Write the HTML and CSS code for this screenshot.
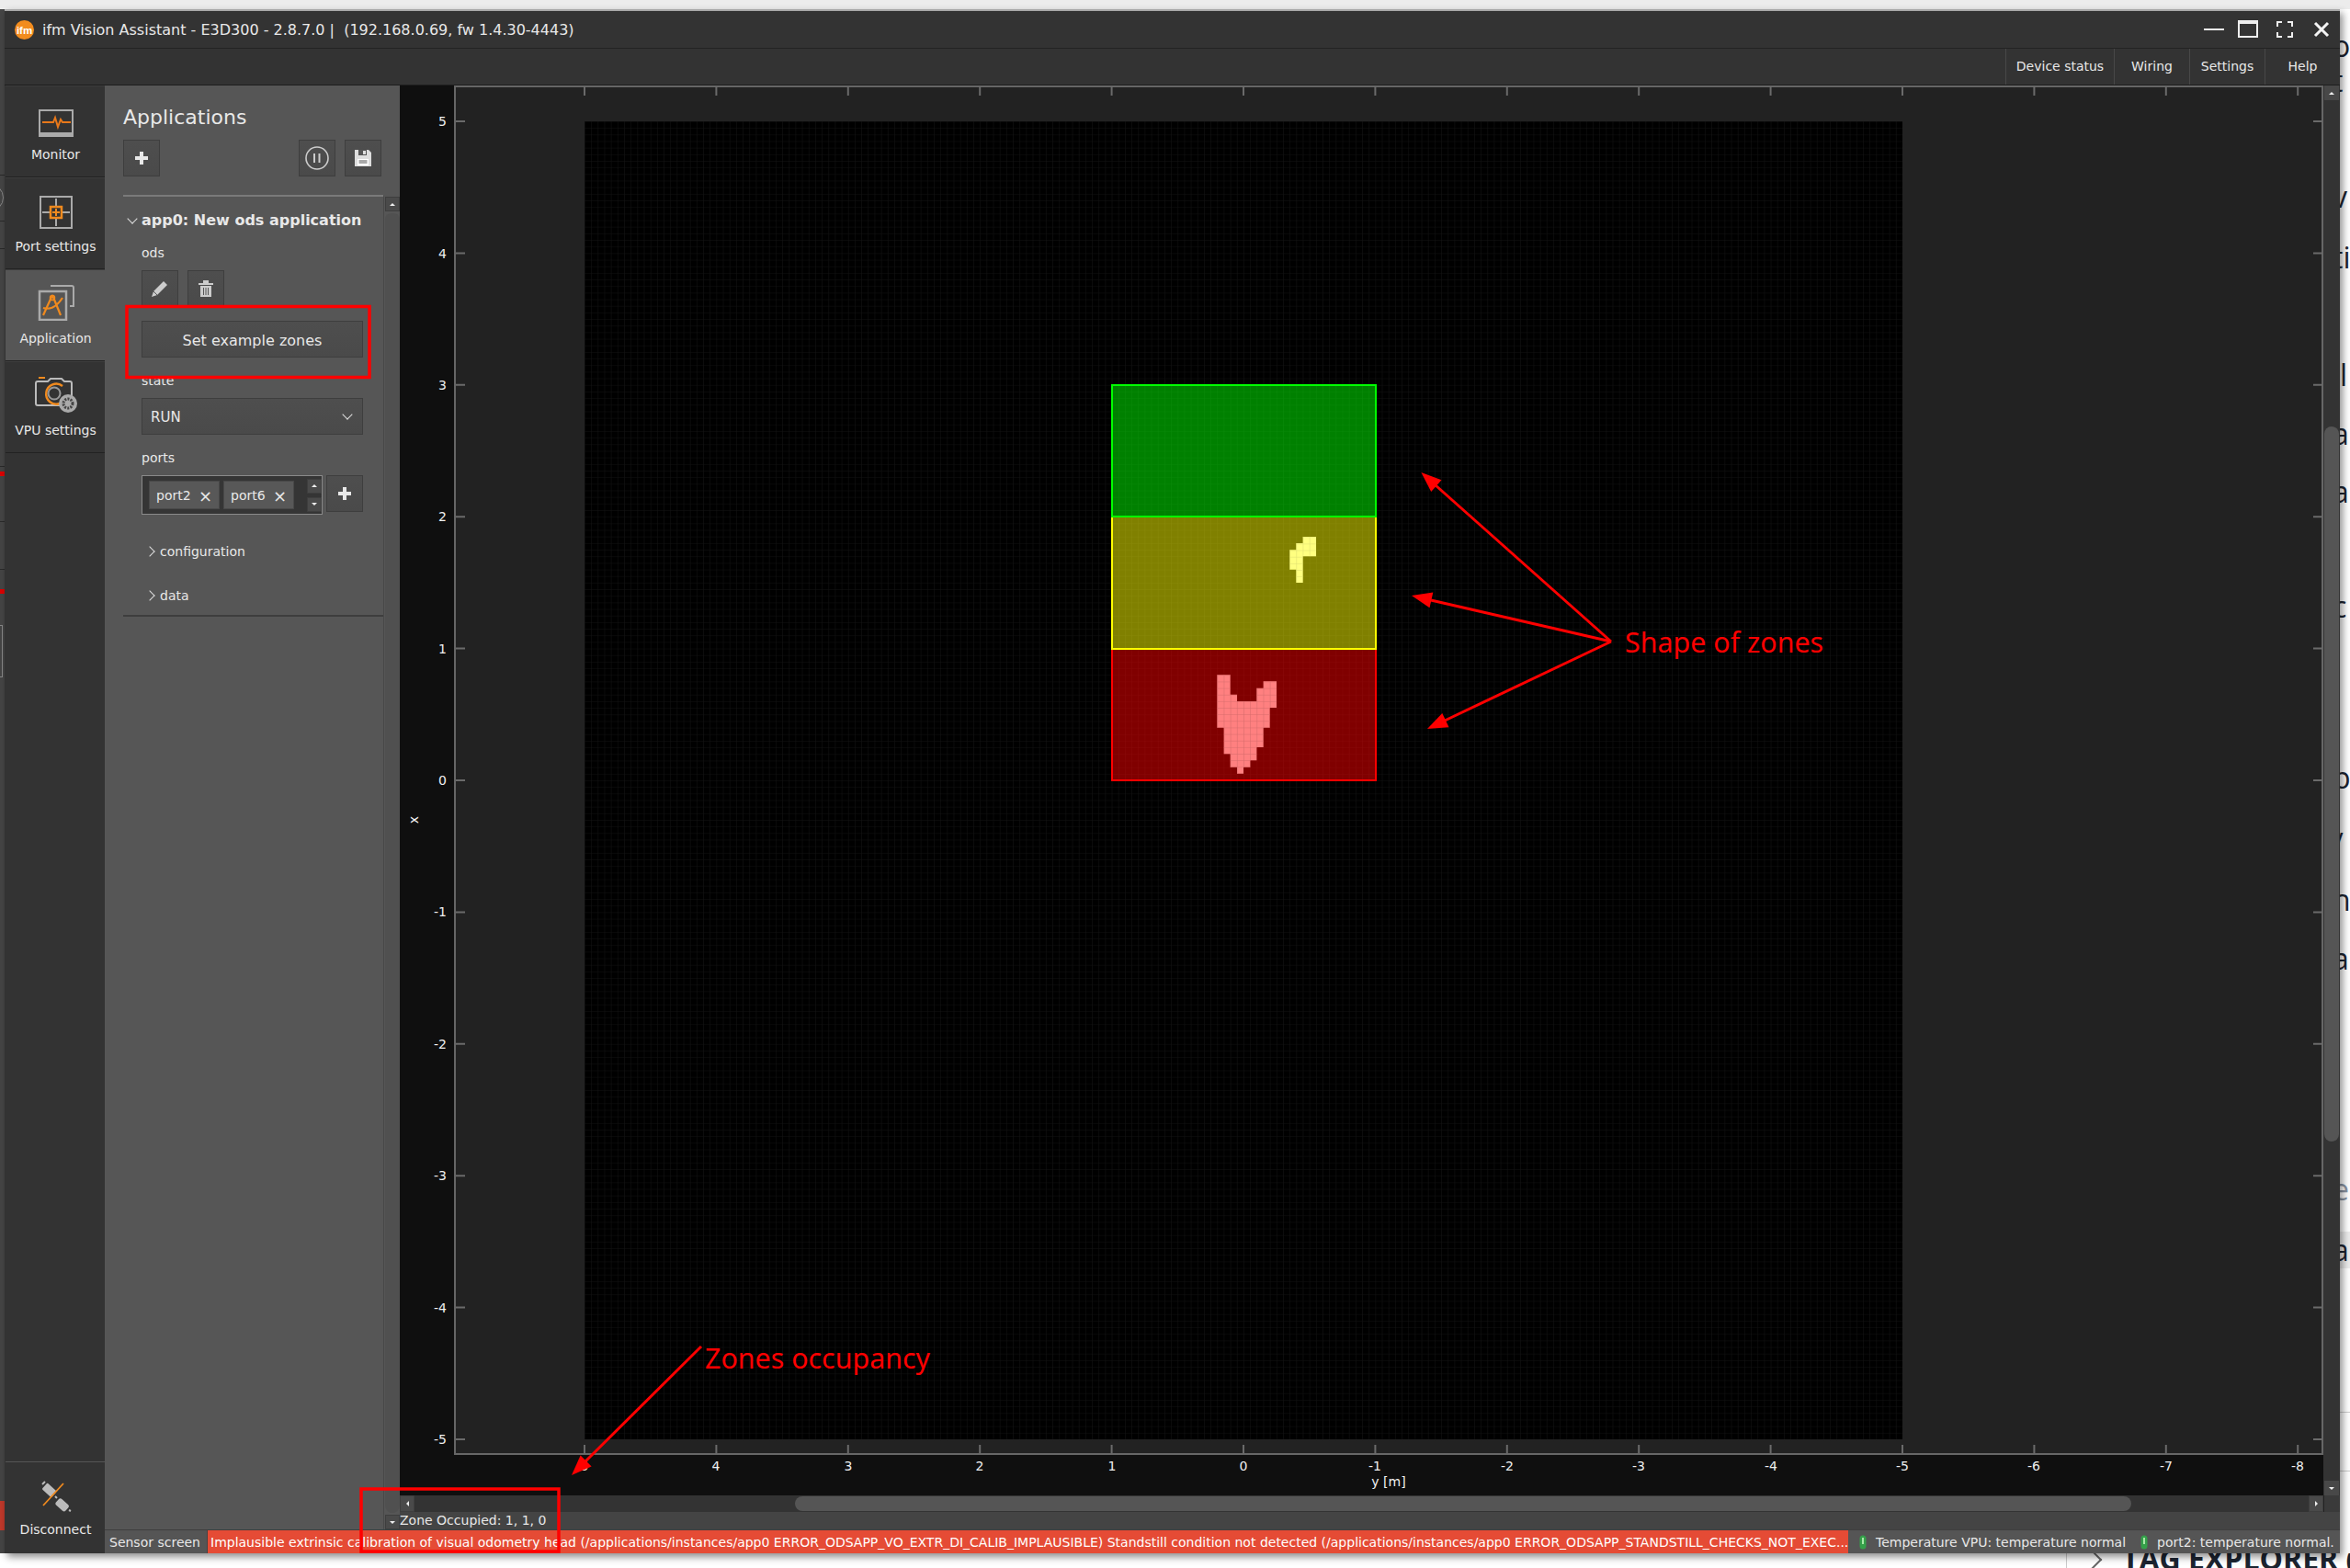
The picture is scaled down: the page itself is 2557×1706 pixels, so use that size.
FILE: index.html
```html
<!DOCTYPE html>
<html lang="en">
<head>
  <meta charset="UTF-8" />
  <title>ifm Vision Assistant</title>
  <link rel="stylesheet" href="styles.css">
</head>
<body>
  <!-- what is visible of the desktop behind the window -->
  <div class="behind">
    <div class="behind-top"></div>
    <div class="behind-left">
      <i class="hl" style="top:180px"></i>
      <i class="hl" style="top:230px"></i>
      <i class="hl" style="top:260px"></i>
      <i class="hl" style="top:497px"></i>
      <i class="hl" style="top:557px"></i>
      <i class="hl" style="top:609px"></i>
      <i class="arc"></i>
      <i class="mark" style="top:503px"></i>
      <i class="mark" style="top:631px"></i>
      <i class="box"></i>
      <i class="mark mark-big" style="top:1623px"></i>
    </div>
    <span class="ch" style="top:30px">o</span>
    <span class="ch" style="top:68px">t</span>
    <span class="ch" style="top:194px">v</span>
    <span class="ch" style="top:260px">ti</span>
    <span class="ch" style="top:388px">il</span>
    <span class="ch" style="top:452px">a</span>
    <span class="ch" style="top:515px">a</span>
    <span class="ch" style="top:640px">c</span>
    <span class="ch" style="top:826px">p</span>
    <span class="ch" style="top:898px">/</span>
    <span class="ch" style="top:959px">n</span>
    <span class="ch" style="top:1023px">a</span>
    <span class="ch ch-dim" style="top:1274px">el</span>
    <span class="ch ch-band" style="top:1340px">a</span>
    <span class="ch" style="top:1400px">.</span>
    <div class="rule" style="top:1536px"></div>
    <div class="rule" style="top:1600px"></div>
    <div class="tag-line"></div>
    <div class="tag-chev"></div>
    <div class="tag-title">TAG EXPLORER (</div>
  </div>

  <div class="window">
    <header class="titlebar">
      <svg class="logo" viewBox="0 0 24 24"><circle cx="12" cy="12" r="11" fill="#f28c1e"/><text x="12" y="17" text-anchor="middle" font-family="Liberation Sans" font-size="12" font-weight="700" fill="#fff">ifm</text></svg>
      <div class="title">ifm Vision Assistant - E3D300 - 2.8.7.0 |&nbsp; (192.168.0.69, fw 1.4.30-4443)</div>
      <div class="win-btns">
        <svg width="24" height="20" viewBox="0 0 24 20"><path d="M1 10h22" stroke="#eee" stroke-width="2"/></svg>
        <svg class="w-max" width="24" height="20" viewBox="0 0 24 20"><path d="M2 2h20v16H2z" fill="none" stroke="#eee" stroke-width="2"/><path d="M1 2h22" stroke="#eee" stroke-width="4"/></svg>
        <svg class="w-full" width="20" height="20" viewBox="0 0 20 20"><path d="M7 2H2v5M13 2h5v5M7 18H2v-5M13 18h5v-5" fill="none" stroke="#eee" stroke-width="2"/></svg>
        <svg class="w-close" width="18" height="18" viewBox="0 0 18 18"><path d="M2 2l14 14M16 2L2 16" stroke="#f4f4f4" stroke-width="3"/></svg>
      </div>
    </header>

    <nav class="menubar">
      <a class="menu-item m-wide">Device status</a>
      <a class="menu-item">Wiring</a>
      <a class="menu-item">Settings</a>
      <a class="menu-item">Help</a>
    </nav>

    <div class="main">
      <aside class="sidebar">
        <div class="side-item">
          <svg class="side-icon" width="40" height="30" viewBox="0 0 40 30">
            <path d="M2 1h36v28H2z" fill="#333" stroke="#aaa" stroke-width="2"/><path d="M1 25h38v5H1z" fill="#aaa"/>
            <path d="M5 14h12l2-5 3 10 3-8 2 3h9" fill="none" stroke="#e8781a" stroke-width="2"/>
          </svg>
          <span>Monitor</span>
        </div>
        <div class="side-item">
          <svg class="side-icon" width="36" height="36" viewBox="0 0 36 36">
            <path d="M1 1h34v34H1z" fill="none" stroke="#aaa" stroke-width="2"/>
            <path d="M18 3v8M18 25v8M3 18h8M25 18h8" stroke="#aaa" stroke-width="2"/>
            <path d="M12 12h12v12H12z" fill="none" stroke="#f08a1e" stroke-width="2.5"/><path d="M18 14v8M14 18h8" stroke="#f08a1e" stroke-width="2"/>
          </svg>
          <span>Port settings</span>
        </div>
        <div class="side-item active">
          <svg class="side-icon" width="40" height="40" viewBox="0 0 40 40">
            <path d="M14 2h23a2 2 0 0 1 2 2v20h-4" fill="none" stroke="#aaa" stroke-width="2"/>
            <path d="M2 8h29v31H2z" fill="#555" stroke="#aaa" stroke-width="2.5"/>
            <path d="M16 12l-10 22M16 12l9 22M6 26c6 2 14 0 21-11" fill="none" stroke="#f08a1e" stroke-width="2.2"/><circle cx="16" cy="15" r="2.5" fill="none" stroke="#f08a1e" stroke-width="1.5"/>
          </svg>
          <span>Application</span>
        </div>
        <div class="side-item">
          <svg class="side-icon" width="46" height="40" viewBox="0 0 46 40">
            <path d="M4 2h7" stroke="#f08a1e" stroke-width="2"/>
            <path d="M3 6h11l3-3h12l3 3h6a2 2 0 0 1 2 2v24H3a2 2 0 0 1-2-2V8a2 2 0 0 1 2-2z" fill="none" stroke="#bbb" stroke-width="2"/>
            <path d="M27 30a11 11 0 1 1 3-19" fill="none" stroke="#f08a1e" stroke-width="2.5"/><circle cx="21" cy="19" r="6.5" fill="none" stroke="#999" stroke-width="2"/>
            <circle cx="36" cy="30" r="10" fill="#aaa"/><circle cx="36" cy="30" r="5" fill="none" stroke="#444" stroke-width="3" stroke-dasharray="2 1.2"/>
          </svg>
          <span>VPU settings</span>
        </div>
        <div class="side-fill"></div>
        <div class="side-item side-last">
          <svg class="side-icon" width="34" height="34" viewBox="0 0 34 34">
            <rect x="3" y="6" width="14" height="9" rx="1.500" fill="#bbb" transform="rotate(42 10 10)"/><path d="M2 4l3-3" stroke="#bbb" stroke-width="2"/>
            <rect x="17" y="22" width="14" height="9" rx="2.500" fill="#bbb" transform="rotate(42 24 26)"/><path d="M18 19l-2-2M31 32l2 1" stroke="#bbb" stroke-width="2"/>
            <path d="M25 3L3 27" stroke="#f08a1e" stroke-width="1.800"/>
          </svg>
          <span>Disconnect</span>
        </div>
      </aside>

      <div class="work">
        <div class="work-top">
          <section class="panel">
            <div class="panel-head">
              <h2>Applications</h2>
              <div class="head-btns">
                <button class="btn-sq"><svg width="18" height="18" viewBox="0 0 18 18"><path d="M9 2v14M2 9h14" stroke="#e8e8e8" stroke-width="4"/></svg></button>
                <span class="spacer"></span>
                <button class="btn-sq"><svg width="28" height="28" viewBox="0 0 28 28"><circle cx="14" cy="14" r="12" fill="none" stroke="#ccc" stroke-width="1.6"/><path d="M11 9v10M16.500 9v10" stroke="#ccc" stroke-width="2"/></svg></button>
                <button class="btn-sq"><svg width="20" height="20" viewBox="0 0 20 20"><path d="M1 1h15l3 3v15H1z" fill="#ddd"/><path d="M5 1h9v6H5z" fill="#555"/><path d="M10 2h3v4h-3z" fill="#ddd"/><path d="M4 11h12v7H4z" fill="#fff"/><path d="M5.500 13h9M5.500 15h9" stroke="#555"/></svg></button>
              </div>
            </div>
            <div class="panel-body">
              <div class="app-list">
                <div class="app">
                  <div class="app-name"><i class="chev chev-down"></i>app0: New ods application</div>
                  <div class="lbl lbl-first">ods</div>
                  <div class="row-btns">
                    <button class="btn-sq"><svg width="20" height="20" viewBox="0 0 20 20"><path d="M1 19l2-6L14 2l4 4L7 17z" fill="#ccc"/><path d="M3 13l4 4" stroke="#555"/></svg></button>
                    <button class="btn-sq"><svg width="18" height="20" viewBox="0 0 18 20"><path d="M1 4h16v2H1zM6 4V1h6v3" fill="#ccc"/><path d="M3 7h12v12H3z" fill="#ccc"/><path d="M6.500 9v8M9 9v8M11.500 9v8" stroke="#555"/></svg></button>
                  </div>
                  <button class="btn-wide">Set example zones</button>
                  <div class="lbl">state</div>
                  <div class="combo">RUN<i class="chev chev-down"></i></div>
                  <div class="lbl">ports</div>
                  <div class="ports">
                    <div class="port-box">
                      <span class="chip">port2<b>&#215;</b></span>
                      <span class="chip">port6<b>&#215;</b></span>
                      <span class="spin"><i class="sb"><i class="tri up"></i></i><i class="sb"><i class="tri dn"></i></i></span>
                    </div>
                    <button class="btn-sq"><svg width="18" height="18" viewBox="0 0 18 18"><path d="M9 2v14M2 9h14" stroke="#e8e8e8" stroke-width="4"/></svg></button>
                  </div>
                  <div class="tree tree-first"><i class="chev chev-right"></i>configuration</div>
                  <div class="tree"><i class="chev chev-right"></i>data</div>
                </div>
              </div>
              <div class="vbar">
                <div class="sb"><i class="tri up"></i></div>
                <div class="vbar-thumb"></div>
                <div class="sb"><i class="tri dn"></i></div>
              </div>
            </div>
          </section>

          <section class="center">
            <div class="plot-row">
              <svg class="plot" width="2093" height="1534" viewBox="435 93 2093 1534">
                <defs>
                  <pattern id="grid" x="636" y="132" width="7.17" height="7.17" patternUnits="userSpaceOnUse">
                    <path d="M0 0h7.17M0 0v7.17" stroke="#141414" stroke-width="1" fill="none"/>
                  </pattern>
                  <pattern id="cellRed" x="403" y="1003" width="21.5" height="21.43" patternUnits="userSpaceOnUse">
                    <path d="M0 0h21.5M0 0v21.43" stroke="#d46a6a" stroke-width="3" fill="none"/>
                  </pattern>
                  <pattern id="cellYel" x="403" y="1003" width="21.5" height="21.43" patternUnits="userSpaceOnUse">
                    <path d="M0 0h21.5M0 0v21.43" stroke="#dcdc70" stroke-width="3" fill="none"/>
                  </pattern>
                </defs>
                <rect x="435" y="93" width="2093" height="1534" fill="#0f0f0f"/>
                <rect x="495" y="94" width="2032" height="1488" fill="#222" stroke="#666" stroke-width="2"/>
                <path class="tick" d="M496 132h10M496 275.400h10M496 418.800h10M496 562.200h10M496 705.600h10M496 849h10M496 992.400h10M496 1135.800h10M496 1279.200h10M496 1422.600h10M496 1566h10"/>
                <path class="tick" d="M2517 132h10M2517 275.400h10M2517 418.800h10M2517 562.200h10M2517 705.600h10M2517 849h10M2517 992.400h10M2517 1135.800h10M2517 1279.200h10M2517 1422.600h10M2517 1566h10"/>
                <path class="tick" d="M636 94v10M779.400 94v10M922.800 94v10M1066.200 94v10M1209.600 94v10M1353 94v10M1496.400 94v10M1639.800 94v10M1783.200 94v10M1926.600 94v10M2070 94v10M2213.400 94v10M2356.800 94v10M2500.200 94v10"/>
                <path class="tick" d="M636 1572v10M779.400 1572v10M922.800 1572v10M1066.200 1572v10M1209.600 1572v10M1353 1572v10M1496.400 1572v10M1639.800 1572v10M1783.200 1572v10M1926.600 1572v10M2070 1572v10M2213.400 1572v10M2356.800 1572v10M2500.200 1572v10"/>

                <g class="axis-y">
                  <text x="486" y="137">5</text><text x="486" y="281">4</text><text x="486" y="424">3</text><text x="486" y="567">2</text><text x="486" y="711">1</text><text x="486" y="854">0</text>
                  <text x="486" y="997">-1</text><text x="486" y="1141">-2</text><text x="486" y="1284">-3</text><text x="486" y="1428">-4</text><text x="486" y="1571">-5</text>
                </g>
                <g class="axis-x">
                  <text x="636" y="1600">5</text><text x="779" y="1600">4</text><text x="923" y="1600">3</text><text x="1066" y="1600">2</text><text x="1210" y="1600">1</text><text x="1353" y="1600">0</text>
                  <text x="1496" y="1600">-1</text><text x="1640" y="1600">-2</text><text x="1783" y="1600">-3</text><text x="1927" y="1600">-4</text><text x="2070" y="1600">-5</text><text x="2213" y="1600">-6</text><text x="2357" y="1600">-7</text><text x="2500" y="1600">-8</text>
                  <text x="1511" y="1617">y [m]</text>
                </g>
                <text class="axis-name" transform="translate(455 892) rotate(-90)" text-anchor="middle">x</text>

                <rect x="636" y="132" width="1434" height="1434" fill="#000"/>
                <rect x="636" y="132" width="1434" height="1434" fill="url(#grid)"/>

                <rect x="1210" y="706" width="287" height="143" fill="#f00" fill-opacity=".5" stroke="#f00" stroke-width="2"/>
                <rect x="1210" y="562" width="287" height="144" fill="#ff0" fill-opacity=".5" stroke="#ff0" stroke-width="2"/>
                <rect x="1210" y="419" width="287" height="143" fill="#0f0" fill-opacity=".5" stroke="#0f0" stroke-width="2"/>

                <g transform="translate(1190 400) scale(.33333)">
                  <path d="M683 552H726V616H683V702H661V659H640V595H661V573H683Z" fill="#ffff80"/>
                  <path d="M683 552H726V616H683V702H661V659H640V595H661V573H683Z" fill="url(#cellYel)"/>
                  <path d="M403 1003H446V1067H468V1089H532V1046H554V1024H597V1110H575V1175H554V1239H532V1282H511V1304H489V1325H468V1304H446V1261H425V1175H403Z" fill="#ff8080"/>
                  <path d="M403 1003H446V1067H468V1089H532V1046H554V1024H597V1110H575V1175H554V1239H532V1282H511V1304H489V1325H468V1304H446V1261H425V1175H403Z" fill="url(#cellRed)"/>
                </g>
              </svg>
              <div class="vbar vbar-plot">
                <div class="sb sb-top"><i class="tri up"></i></div>
                <div class="plot-thumb"></div>
                <div class="sb"><i class="tri dn"></i></div>
              </div>
            </div>
            <div class="hbar-row">
              <div class="hbar">
                <div class="sb"><i class="tri lf"></i></div>
                <div class="hbar-track"><div class="hbar-thumb"></div></div>
                <div class="sb"><i class="tri rt"></i></div>
              </div>
              <div class="corner"></div>
            </div>
            <div class="zonebar">Zone Occupied: 1, 1, 0</div>
          </section>
        </div>

        <footer class="status">
          <span class="st-name">Sensor screen</span>
          <span class="st-err">Implausible extrinsic calibration of visual odometry head (/applications/instances/app0 ERROR_ODSAPP_VO_EXTR_DI_CALIB_IMPLAUSIBLE) Standstill condition not detected (/applications/instances/app0 ERROR_ODSAPP_STANDSTILL_CHECKS_NOT_EXEC...</span>
          <span class="st-temp"><svg width="8" height="16" viewBox="0 0 8 16"><rect x="0.500" y="0.500" width="7" height="15" rx="3.500" fill="#35a04a"/><rect x="3" y="3" width="2" height="7" fill="#a8e8a8"/></svg>Temperature VPU: temperature normal</span>
          <span class="st-temp st-port"><svg width="8" height="16" viewBox="0 0 8 16"><rect x="0.500" y="0.500" width="7" height="15" rx="3.500" fill="#35a04a"/><rect x="3" y="3" width="2" height="7" fill="#a8e8a8"/></svg>port2: temperature normal.</span>
        </footer>
      </div>
    </div>
  </div>

  <!-- red notes drawn over the screenshot -->
  <svg class="notes" width="2557" height="1706" viewBox="0 0 2557 1706">
    <rect x="138" y="333.500" width="264" height="77"/>
    <rect x="393" y="1620" width="215" height="68"/>
    <path d="M1753 698L1562 528M1753 698L1557 653M1753 698L1572 784M763 1465L637 1590"/>
    <polygon points="1546.400,514 1557.200,535 1568.500,522.200"/>
    <polygon points="1536,648 1555.500,661.200 1559.300,644.600"/>
    <polygon points="1553,793 1576.500,791.300 1569.300,775.900"/>
    <polygon points="622,1605 643.600,1595.500 631.600,1583.500"/>
    <text x="1768" y="710">Shape of zones</text>
    <text x="767" y="1489">Zones occupancy</text>
  </svg>
</body>
</html>
```
FILE: styles.css
```css
*{box-sizing:border-box;}
html,body{
  margin:0;
  height:100%;
}
body{
  width:2557px;
  height:1706px;
  overflow:hidden;
  position:relative;
  background:#fff;
  font-family:"DejaVu Sans",sans-serif;
  font-size:14px;
  color:#e8e8e8;
}

/* desktop behind the window */
.behind{
  position:absolute;
  inset:0;
  overflow:hidden;
  color:#1c2430;
}
.behind-top{
  height:10px;
  background:#ececec;
}
.behind-left{
  position:absolute;
  left:0;
  top:10px;
  width:6px;
  height:1680px;
  background:#454545;
}
.hl{
  position:absolute;
  left:0;
  width:6px;
  height:1px;
  background:#2a2a2a;
}
.arc{
  position:absolute;
  left:-26px;
  top:190px;
  width:30px;
  height:30px;
  border:1px solid #888;
  border-radius:50%;
}
.box{
  position:absolute;
  left:-4px;
  top:670px;
  width:7px;
  height:57px;
  border:1px solid #888;
}
.mark{
  position:absolute;
  left:0;
  width:6px;
  height:5px;
  background:#d00;
}
.mark-big{
  height:32px;
  background:#c0392b;
}
.ch{
  position:absolute;
  left:2546px;
  font-family:"Open Sans",sans-serif;
  font-size:32px;
  line-height:40px;
  text-indent:-8px;
  white-space:nowrap;
}
.ch-dim{ color:#8a94a3; }
.ch-band{
  width:11px;
  background:#ececec;
}
.rule{
  position:absolute;
  left:2546px;
  right:0;
  height:1px;
  background:#ccc;
}
.tag-line{
  position:absolute;
  left:2248px;
  top:1690px;
  width:1px;
  height:16px;
  background:#ccc;
}
.tag-chev{
  position:absolute;
  left:2268px;
  top:1689px;
  width:16px;
  height:16px;
  border-top:2px solid #666;
  border-right:2px solid #666;
  transform:rotate(45deg);
}
.tag-title{
  position:absolute;
  left:2309px;
  top:1690px;
  height:16px;
  overflow:hidden;
  font-family:"Open Sans",sans-serif;
  font-size:32px;
  font-weight:700;
  line-height:12px;
  color:#1c2430;
  white-space:nowrap;
}

/* window */
.window{
  position:absolute;
  left:5px;
  top:10px;
  width:2541px;
  height:1680px;
  display:flex;
  flex-direction:column;
  border-top:2px solid #a8a8a8;
  background:#333;
  box-shadow:3px 4px 8px rgba(0,0,0,.45);
}
.titlebar{
  height:41px;
  flex:none;
  display:flex;
  align-items:center;
  padding-left:10px;
  background:#333;
  border-bottom:1px solid #222;
}
.logo{
  width:23px;
  height:23px;
  margin-right:8px;
}
.title{
  font-size:16px;
  color:#e8e8e8;
  white-space:pre;
}
.win-btns{
  margin-left:auto;
  display:flex;
  align-items:center;
  padding-right:11px;
}
.w-max{ margin-left:13px; }
.w-full{ margin-left:18px; }
.w-close{ margin-left:21px; }
.menubar{
  height:40px;
  flex:none;
  display:flex;
  justify-content:flex-end;
  background:#333;
  border-bottom:1px solid #1e1e1e;
}
.menu-item{
  width:82px;
  display:flex;
  align-items:center;
  justify-content:center;
  padding-bottom:1px;
  border-left:1px solid #484848;
  font-size:14px;
}
.m-wide{ width:118px; }

.main{
  flex:1;
  min-height:0;
  display:flex;
}

/* left icon column */
.sidebar{
  width:108px;
  flex:none;
  margin-left:1px;
  display:flex;
  flex-direction:column;
  background:#333;
}
.side-item{
  height:100px;
  flex:none;
  display:flex;
  flex-direction:column;
  align-items:center;
  justify-content:flex-end;
  padding:0 0 16px 1px;
  border-bottom:1px solid #222;
  border-top:1px solid #3e3e3e;
  font-size:14px;
}
.side-item.active{ background:#565656; }
.side-icon{ margin-bottom:11px; }
.side-fill{ flex:1; }
.side-last{
  border-bottom:none;
  border-top:1px solid #555;
  padding-bottom:18px;
}

.work{
  flex:1;
  min-width:0;
  display:flex;
  flex-direction:column;
}
.work-top{
  flex:1;
  min-height:0;
  display:flex;
}

/* applications panel */
.panel{
  width:321px;
  flex:none;
  display:flex;
  flex-direction:column;
  background:#565656;
}
.panel-head{
  height:119px;
  flex:none;
  padding:0 20px 0 20px;
}
.panel-head h2{
  margin:0;
  padding-top:21px;
  height:59px;
  font-size:22px;
  font-weight:400;
  line-height:28px;
}
.head-btns{
  display:flex;
  gap:10px;
}
.spacer{ flex:1; }
.btn-sq{
  width:40px;
  height:40px;
  flex:none;
  padding:0;
  display:flex;
  align-items:center;
  justify-content:center;
  background:linear-gradient(#4e4e4e,#4a4a4a);
  border:1px solid #3e3e3e;
}
.panel-body{
  flex:1;
  min-height:0;
  display:flex;
}
.app-list{
  flex:1;
  min-width:0;
  padding-left:20px;
}
.app{
  border-top:2px solid #7a7a7a;
  border-bottom:2px solid #3e3e3e;
  padding:15px 22px 11px 20px;
}
.app-name{
  position:relative;
  height:20px;
  font-size:16px;
  font-weight:700;
  line-height:22px;
  white-space:nowrap;
}
.app-name .chev{
  position:absolute;
  left:-14px;
  top:5px;
}
.chev{
  display:inline-block;
  width:8px;
  height:8px;
  border-right:1.5px solid #ddd;
  border-bottom:1.500px solid #ddd;
}
.chev-down{ transform:rotate(45deg); }
.chev-right{ transform:rotate(-45deg); }
.lbl{
  height:20px;
  margin-top:14px;
  font-size:14px;
  line-height:22px;
}
.lbl-first{ margin-top:15px; }
.row-btns{
  display:flex;
  gap:10px;
  margin-top:10px;
}
.btn-wide{
  display:block;
  width:100%;
  height:40px;
  margin-top:15px;
  padding:2px 0 0;
  background:linear-gradient(#4e4e4e,#4a4a4a);
  border:1px solid #3e3e3e;
  color:#e8e8e8;
  font:16px "DejaVu Sans",sans-serif;
}
.combo{
  height:40px;
  margin-top:10px;
  padding:2px 12px 0 9px;
  display:flex;
  align-items:center;
  justify-content:space-between;
  background:linear-gradient(#4e4e4e,#4a4a4a);
  border:1px solid #3e3e3e;
  font-size:15px;
}
.combo .chev{ margin-top:-6px; }
.ports{
  display:flex;
  justify-content:space-between;
  margin-top:10px;
}
.port-box{
  width:197px;
  height:43px;
  display:flex;
  align-items:center;
  gap:4px;
  padding-left:7px;
  background:#353535;
  border:1px solid #8a8a8a;
}
.chip{
  width:77px;
  height:31px;
  display:flex;
  align-items:center;
  justify-content:space-between;
  padding:1px 7px 0 7px;
  background:#585858;
  border:1px solid #484848;
  font-size:14px;
}
.chip b{ font-size:18px; font-weight:400; }
.spin{
  margin-left:10px;
  display:flex;
  flex-direction:column;
  gap:4px;
}
.sb{
  width:16px;
  height:16px;
  flex:none;
  display:flex;
  align-items:center;
  justify-content:center;
  background:#4a4a4a;
  border:1px solid #3e3e3e;
}
.tri{
  width:0;
  height:0;
  border:3px solid transparent;
}
.tri.up{ border-bottom-color:#eee; margin-top:-3px; }
.tri.dn{ border-top-color:#eee; margin-top:3px; }
.tri.lf{ border-right-color:#eee; margin-left:-3px; }
.tri.rt{ border-left-color:#eee; margin-left:3px; }
.tree{
  display:flex;
  align-items:center;
  gap:7px;
  height:20px;
  margin-top:28px;
  padding-left:8px;
  font-size:14px;
}
.tree-first{ margin-top:30px; }
.tree .chev{ margin-left:-3px; }
.vbar{
  width:18px;
  flex:none;
  display:flex;
  flex-direction:column;
  align-items:center;
  border-left:1px solid #484848;
  border-top:2px solid #565656;
}
.vbar-thumb{
  flex:1;
  width:16px;
  margin:2px 0;
  border-radius:8px 8px 10px 10px;
  background:#505050;
}

/* plot area */
.center{
  flex:1;
  min-width:0;
  display:flex;
  flex-direction:column;
  background:#444;
}
.plot-row{
  height:1534px;
  flex:none;
  display:flex;
}
.plot{ display:block; flex:none; }
.tick{
  stroke:#6a6a6a;
  stroke-width:2;
  fill:none;
}
.axis-y text{
  fill:#f0f0f0;
  font-size:14px;
  text-anchor:end;
}
.axis-x text{
  fill:#f0f0f0;
  font-size:14px;
  text-anchor:middle;
}
.axis-name{
  fill:#f0f0f0;
  font-size:14px;
}
.vbar-plot{
  border:none;
  background:#333;
  position:relative;
  justify-content:space-between;
}
.vbar-plot .sb{ background:#484848; border-color:#484848; }
.plot-thumb{
  position:absolute;
  left:1px;
  top:371px;
  width:16px;
  height:778px;
  border-radius:9px;
  background:#555;
}
.hbar-row{
  height:18px;
  flex:none;
  display:flex;
  background:#333;
}
.hbar{
  flex:1;
  display:flex;
}
.hbar .sb{ height:18px; }
.hbar-track{
  flex:1;
  position:relative;
  background:#333;
}
.hbar-thumb{
  position:absolute;
  left:414px;
  right:193px;
  top:1px;
  height:16px;
  border-radius:9px;
  background:#555;
}
.corner{
  width:18px;
  flex:none;
  background:#3a3a3a;
  border-left:1px solid #222;
}
.zonebar{
  flex:1;
  display:flex;
  align-items:center;
  padding-bottom:2px;
  font-size:14px;
  white-space:nowrap;
}

/* status bar */
.status{
  height:26px;
  flex:none;
  display:flex;
  align-items:center;
  background:#555;
  border-top:1px solid #3e3e3e;
  white-space:nowrap;
  font-size:14px;
}
.st-name{
  width:111px;
  padding-left:5px;
}
.st-err{
  width:1786px;
  height:100%;
  display:flex;
  align-items:center;
  padding-left:3px;
  background:#e54b35;
  color:#fff;
  overflow:hidden;
  border-left:1px solid #444;
}
.st-temp{
  display:flex;
  align-items:center;
  gap:10px;
  margin-left:12px;
}
.st-port{ margin-left:16px; }

/* annotations */
.notes{
  position:absolute;
  left:0;
  top:0;
}
.notes rect{
  fill:none;
  stroke:#f00;
  stroke-width:3.500;
}
.notes path{
  fill:none;
  stroke:#f00;
  stroke-width:3;
}
.notes polygon{ fill:#f00; }
.notes text{
  fill:#f00;
  font-family:"Noto Sans",sans-serif;
  font-size:30.400px;
}
```
